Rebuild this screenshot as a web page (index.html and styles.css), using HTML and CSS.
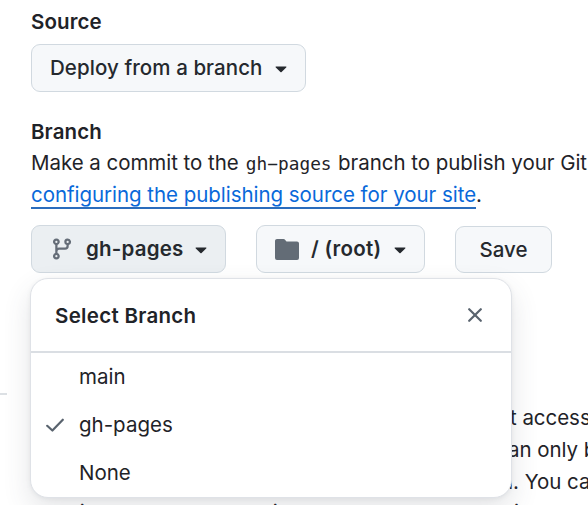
FILE: index.html
```
<!DOCTYPE html>
<html lang="en">
<head>
<meta charset="utf-8">
<title>Pages settings</title>
<link rel="stylesheet" href="styles.css">
</head>
<body>
<main class="settings">
  <h2 class="label">Source</h2>
  <button class="btn btn-source"><span>Deploy from a branch</span><svg class="caret" viewBox="0 0 12 7"><path d="M1.2 0.5h9.600c.6 0 .8.6.4 1L6.600 6.100a.9.9 0 0 1-1.200 0L.8 1.500c-.4-.4-.2-1 .4-1z"/></svg></button>
  <h2 class="label label-branch">Branch</h2>
  <p class="line"><span>Make a commit to the</span><code>gh−pages</code><span>branch to publish your GitHub</span></p>
  <p class="line"><a class="link" href="#">configuring the publishing source for your site</a>.</p>
  <div class="controls">
    <div class="picker">
      <button class="btn btn-branch"><svg class="icon-branch" viewBox="0 0 16 16"><path d="M9.500 3.250a2.250 2.250 0 1 1 3 2.122V6A2.500 2.500 0 0 1 10 8.500H6a1 1 0 0 0-1 1v1.128a2.251 2.251 0 1 1-1.500 0V5.372a2.250 2.250 0 1 1 1.500 0v1.836A2.493 2.493 0 0 1 6 7h4a1 1 0 0 0 1-1v-.628A2.250 2.250 0 0 1 9.500 3.250Zm-6 0a.75.75 0 1 0 1.500 0 .75.75 0 0 0-1.500 0Zm8.250-.75a.75.75 0 1 0 0 1.500.75.75 0 0 0 0-1.500ZM4.250 12a.75.75 0 1 0 0 1.500.75.75 0 0 0 0-1.500Z"/></svg><span>gh-pages</span><svg class="caret" viewBox="0 0 12 7"><path d="M1.200 0.500h9.600c.6 0 .8.6.4 1L6.600 6.100a.9.9 0 0 1-1.200 0L.8 1.500c-.4-.4-.2-1 .4-1z"/></svg></button>
      <section class="menu">
        <header class="menu-head"><h3>Select Branch</h3><svg class="close" viewBox="0 0 14 14"><path d="M1.200 1.200l11.600 11.600M12.800 1.200L1.200 12.800"/></svg></header>
        <ul>
          <li><span class="mark"></span><span>main</span></li>
          <li><span class="mark"><svg class="check" viewBox="0 0 18 14"><path d="M1.200 7.800l5.200 4.700L16.800 1.700"/></svg></span><span>gh-pages</span></li>
          <li><span class="mark"></span><span>None</span></li>
        </ul>
      </section>
    </div>
    <button class="btn btn-root"><svg class="icon-folder" viewBox="0 0 24 21"><path d="M2 0h6.500c.8 0 1.300.3 1.700.9l1.300 1.700H22c1.100 0 2 .8 2 1.900V19a2 2 0 0 1-2 2H2a2 2 0 0 1-2-2V2C0 .9.900 0 2 0z"/></svg><span>/ (root)</span><svg class="caret" viewBox="0 0 12 7"><path d="M1.200 0.500h9.600c.6 0 .8.6.4 1L6.600 6.100a.9.9 0 0 1-1.200 0L.8 1.500c-.4-.4-.2-1 .4-1z"/></svg></button>
    <button class="btn btn-save"><span>Save</span></button>
  </div>
</main>
<hr class="rule">
<section class="visibility">
  <p class="line"><span class="lead lead-1"></span>t access to</p>
  <p class="line"><span class="lead lead-2"></span>an only be</p>
  <p class="line"><span class="lead lead-3"></span>n. You can</p>
  <p class="line last">your internal documentation or knowledge base with</p>
</section>
</body>
</html>
```
FILE: styles.css
```
* { box-sizing: border-box; }
html, body { height: 505px; overflow: hidden; }
body { margin: 0; background: #fff; color: #1f2328; font: 400 20.5px/32px Inter, "Liberation Sans", sans-serif; }
h2, h3, p, ul { margin: 0; padding: 0; }
.settings { padding: 6px 0 0 31px; }
.label { font-size: 20.5px; font-weight: 600; line-height: 32px; letter-spacing: .1px; }
.label-branch { margin-top: 24px; margin-bottom: -1px; }
.btn { display: flex; align-items: center; height: 48px; padding: 0; border: 1px solid #d1d9e0; border-radius: 9px; background: #f6f8fa; color: #25292e; font: 500 20.5px/32px Inter, sans-serif; white-space: nowrap; }
.btn-source { width: 275px; margin-top: 6px; padding-left: 18px; letter-spacing: .07px; }
.caret { width: 12px; height: 7px; margin-left: auto; margin-right: 18px; margin-top: 3px; fill: #25292e; flex: none; }
.line { height: 32px; white-space: nowrap; letter-spacing: -.04px; }
code { font: 17.8px/32px "DejaVu Sans Mono", monospace; letter-spacing: .03px; margin: 0 6.5px 0 7px; }
.link { color: #0969da; text-decoration: none; border-bottom: 2px solid #2a6cbd; }
.controls { display: flex; align-items: flex-start; margin-top: 14px; }
.picker { position: relative; margin-right: 30px; }
.btn-branch { width: 195px; background: #ebeff2; font-weight: 600; letter-spacing: .2px; }
.icon-branch { width: 24px; height: 24px; margin-left: 18px; margin-right: 12px; fill: #656d78; flex: none; }
.btn-root { width: 169px; margin-right: 30px; font-weight: 600; letter-spacing: .25px; }
.icon-folder { width: 24px; height: 21px; margin-left: 18px; margin-right: 12px; fill: #636c76; flex: none; }
.btn-save { width: 97px; height: 47px; margin-top: 1px; justify-content: center; }
.menu { position: absolute; left: -1px; top: 53px; width: 482px; height: 220px; border: 1px solid #dfe2e7; border-radius: 18px; background: #fff; box-shadow: 0 12px 28px rgba(66,74,83,.14), 0 1px 4px rgba(66,74,83,.08); }
.menu-head { display: flex; align-items: center; justify-content: space-between; height: 74px; padding: 1px 29px 0 24px; border-bottom: 2px solid #dadee3; }
.menu-head h3 { font-size: 20.5px; font-weight: 600; line-height: 32px; letter-spacing: .3px; }
.close { width: 14px; height: 14px; margin-bottom: 2px; fill: none; stroke: #59636e; stroke-width: 2.2; stroke-linecap: round; }
.menu ul { list-style: none; }
.menu li { display: flex; align-items: center; height: 48px; }
.mark { display: flex; width: 48px; padding-left: 15px; }
.check { width: 18px; height: 14px; fill: none; stroke: #59636e; stroke-width: 2.2; stroke-linecap: round; stroke-linejoin: round; }
.rule { width: 7px; height: 2px; margin: 120px 0 0; border: 0; background: #dce0e4; }
.visibility { padding: 7px 0 0 31px; }
.lead { display: inline-block; }
.lead-1 { width: 479px; }
.lead-2 { width: 477px; }
.lead-3 { width: 470px; }
.last { margin-top: -1px; }
```
